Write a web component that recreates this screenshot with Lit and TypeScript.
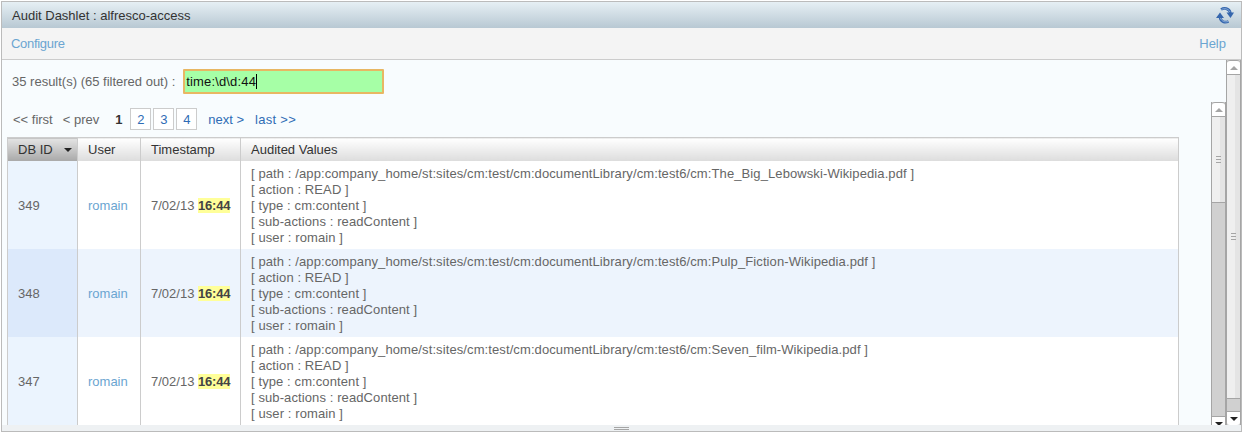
import { LitElement, html, css } from 'lit';
import { customElement } from 'lit/decorators.js';

const rows = [
  { id: '349', file: 'The_Big_Lebowski-Wikipedia.pdf' },
  { id: '348', file: 'Pulp_Fiction-Wikipedia.pdf' },
  { id: '347', file: 'Seven_film-Wikipedia.pdf' },
];

@customElement('sb-bar')
export class ScrollBar extends LitElement {
  static properties = { thumb: { type: Number }, track: { type: Number } };
  thumb = 0;
  track = 0;

  static styles = css`
    :host {
      display: flex;
      flex-direction: column;
      width: 13px;
      border-left: 1px solid #a5a5a5;
      border-right: 1px solid #a5a5a5;
      background: #d0d0d0;
      overflow: hidden;
    }
    .btn {
      flex: none;
      height: 13px;
      background: #fff;
      border-top: 1px solid #a5a5a5;
      border-bottom: 1px solid #a5a5a5;
      border-radius: 3px 3px 0 0;
      display: flex;
      align-items: center;
      justify-content: center;
    }
    .btn.down {
      border-radius: 0 0 3px 3px;
      border-bottom: none;
    }
    .arrow-up {
      width: 0;
      height: 0;
      border: 4px solid transparent;
      border-top: 0;
      border-bottom: 4px solid #a5a5a5;
    }
    .arrow-down {
      width: 0;
      height: 0;
      border: 4px solid transparent;
      border-bottom: 0;
      border-top: 4px solid #222;
    }
    .thumb {
      flex: none;
      box-sizing: border-box;
      border-bottom: 1px solid #a5a5a5;
      background: linear-gradient(to right, #efefef 0, #efefef 8px, #e4e4e4 8px);
      display: flex;
      flex-direction: column;
      align-items: center;
      justify-content: center;
      gap: 2px;
    }
    .thumb i {
      display: block;
      width: 5px;
      height: 1px;
      background: #a5a5a5;
    }
    .track {
      flex: 1;
    }
  `;

  render() {
    return html`
      <div class="btn"><div class="arrow-up"></div></div>
      <div class="thumb" style="height:${this.thumb}px"><i></i><i></i><i></i></div>
      <div class="track" style="${this.track ? `flex:none;height:${this.track}px` : ''}"></div>
      <div class="btn down"><div class="arrow-down"></div></div>
    `;
  }
}

@customElement('app-root')
export class AppRoot extends LitElement {
  static styles = css`
    :host {
      display: block;
      width: 1243px;
      height: 435px;
      background: #fff;
      font-family: 'Liberation Sans', Arial, sans-serif;
      font-size: 13px;
      color: #666;
      overflow: hidden;
    }
    .dashlet {
      box-sizing: border-box;
      margin: 1px 1px 0 1px;
      height: 431px;
      border: 1px solid #bbb;
      display: flex;
      flex-direction: column;
    }
    .title {
      flex: none;
      height: 26px;
      box-sizing: border-box;
      padding: 0 7px 0 10px;
      background: linear-gradient(#e6eff4, #b8c8d3);
      display: flex;
      align-items: center;
      justify-content: space-between;
      color: #333;
    }
    .toolbar {
      flex: none;
      height: 32px;
      box-sizing: border-box;
      padding: 0 15px 0 9px;
      background: #f4f4f4;
      border-bottom: 1px solid #ccc;
      display: flex;
      align-items: center;
      justify-content: space-between;
    }
    .toolbar .configure {
      letter-spacing: -0.3px;
    }
    a {
      color: #6ba5d1;
      text-decoration: none;
    }
    .main {
      flex: 1;
      min-height: 0;
      background: #f8fcfe;
      display: flex;
    }
    .content {
      flex: 1;
      min-width: 0;
      overflow: hidden;
      display: flex;
      flex-direction: column;
      padding: 9px 0 0 5px;
    }
    .filter {
      flex: none;
      display: flex;
      align-items: center;
      height: 25px;
      padding-left: 5px;
      gap: 8px;
    }
    .input {
      box-sizing: border-box;
      width: 201px;
      height: 25px;
      border: 2px solid #e8b763;
      border-radius: 1px;
      background: #a6ffa6;
      color: #111;
      padding: 0 1px;
      display: flex;
      align-items: center;
      letter-spacing: 0.15px;
    }
    .caret {
      display: inline-block;
      width: 1px;
      height: 15px;
      background: #000;
    }
    .split {
      flex: 1;
      min-height: 0;
      display: flex;
      gap: 32px;
    }
    .left {
      flex: 1;
      min-width: 0;
      display: flex;
      flex-direction: column;
    }
    .pager {
      flex: none;
      display: flex;
      align-items: center;
      height: 22px;
      margin: 14px 0 7px;
      padding-left: 6px;
      color: #666;
    }
    .pager .prev {
      margin-left: 10px;
    }
    .pager .cur {
      margin-left: 16px;
      width: 15px;
      font-weight: bold;
      color: #333;
    }
    .pager .num {
      box-sizing: border-box;
      width: 21px;
      height: 22px;
      margin-right: 2px;
      border: 1px solid #ccc;
      background: #fff;
      display: flex;
      align-items: center;
      justify-content: center;
    }
    .pager a {
      color: #2f6cb5;
    }
    .pager .next {
      margin-left: 9px;
    }
    .pager .last {
      margin-left: 11px;
      letter-spacing: 0.3px;
    }
    .tablewrap {
      flex: 1;
      min-height: 0;
      overflow: hidden;
    }
    table {
      box-sizing: border-box;
      width: 100%;
      table-layout: fixed;
      border-collapse: collapse;
      background: #fff;
      border: 1px solid #ccc;
      border-bottom: none;
    }
    th {
      height: 23px;
      padding: 0 0 0 10px;
      text-align: left;
      font-weight: normal;
      color: #333;
      background: linear-gradient(#fff, #dcdcdc);
      border-left: 1px solid #ccc;
    }
    th.sorted {
      background: linear-gradient(#e4e4e4, #a8a8a8);
      border-left: none;
    }
    th .sort {
      display: inline-block;
      width: 0;
      height: 0;
      margin-left: 11px;
      vertical-align: 2px;
      border: 4px solid transparent;
      border-bottom: 0;
      border-top: 4px solid #222;
    }
    td {
      height: 88px;
      box-sizing: border-box;
      padding: 2px 0 0 10px;
      border-left: 1px solid #ccc;
      vertical-align: middle;
      line-height: 16px;
    }
    td:first-child {
      border-left: none;
      background: #ebf4fe;
    }
    td.values {
      letter-spacing: 0.1px;
    }
    tr.alt td {
      background: #edf4fd;
    }
    tr.alt td:first-child {
      background: #dce9fb;
    }
    mark {
      background: #ffff99;
      color: #444;
      font-weight: bold;
      letter-spacing: -0.2px;
    }
    .grip {
      flex: none;
      height: 6px;
      background: #eef1f3;
      display: flex;
      flex-direction: column;
      align-items: center;
      justify-content: center;
      gap: 1px;
    }
    .grip i {
      display: block;
      width: 15px;
      height: 1px;
      background: #a5a5a5;
    }
    sb-bar {
      flex: none;
    }
    sb-bar.inner {
      margin-top: 8px;
    }
  `;

  render() {
    return html`
      <div class="dashlet">
        <div class="title">
          <span>Audit Dashlet : alfresco-access</span>
          <svg width="18" height="18" viewBox="0 0 18 18" fill="none">
            <path d="M5 3.5C8 1.5 13 2 14.5 7" stroke="#3566ad" stroke-width="2.6"/>
            <path d="M5.5 3.5C8 2 12.5 2.5 14 6" stroke="#9dbbe2" stroke-width=".8"/>
            <path d="M10.5 6.5h7.5L14.5 12z" fill="#3566ad"/>
            <path d="M12.5 15.5C9 17 4.5 16 4 11" stroke="#3566ad" stroke-width="2.6"/>
            <path d="M12 15.5C9.5 16.5 5.5 15.5 4.5 12" stroke="#9dbbe2" stroke-width=".8"/>
            <path d="M0 12h8L4 6.5z" fill="#3566ad"/>
          </svg>
        </div>
        <div class="toolbar">
          <a class="configure" href="#">Configure</a>
          <a href="#">Help</a>
        </div>
        <div class="main">
          <div class="content">
            <div class="filter">
              <span>35 result(s) (65 filtered out) :</span>
              <div class="input">time:\\d\\d:44<span class="caret"></span></div>
            </div>
            <div class="split">
              <div class="left">
                <div class="pager">
                  <span>&lt;&lt; first</span>
                  <span class="prev">&lt; prev</span>
                  <span class="cur">1</span>
                  <a class="num" href="#">2</a>
                  <a class="num" href="#">3</a>
                  <a class="num" href="#">4</a>
                  <a class="next" href="#">next &gt;</a>
                  <a class="last" href="#">last &gt;&gt;</a>
                </div>
                <div class="tablewrap">
                  <table>
                    <colgroup>
                      <col style="width:70px" />
                      <col style="width:63px" />
                      <col style="width:100px" />
                      <col />
                    </colgroup>
                    <thead>
                      <tr>
                        <th class="sorted">DB ID<span class="sort"></span></th>
                        <th>User</th>
                        <th>Timestamp</th>
                        <th>Audited Values</th>
                      </tr>
                    </thead>
                    <tbody>
                      ${rows.map(
                        (r, i) => html`
                          <tr class="${i % 2 ? 'alt' : ''}">
                            <td>${r.id}</td>
                            <td><a href="#">romain</a></td>
                            <td>7/02/13 <mark>16:44</mark></td>
                            <td class="values">
                              [ path : /app:company_home/st:sites/cm:test/cm:documentLibrary/cm:test6/cm:${r.file} ]<br />
                              [ action : READ ]<br />
                              [ type : cm:content ]<br />
                              [ sub-actions : readContent ]<br />
                              [ user : romain ]
                            </td>
                          </tr>
                        `
                      )}
                    </tbody>
                  </table>
                </div>
              </div>
              <sb-bar class="inner" .thumb=${86} .track=${213}></sb-bar>
            </div>
          </div>
          <sb-bar class="outer" .thumb=${324}></sb-bar>
        </div>
        <div class="grip"><i></i><i></i></div>
      </div>
    `;
  }
}
